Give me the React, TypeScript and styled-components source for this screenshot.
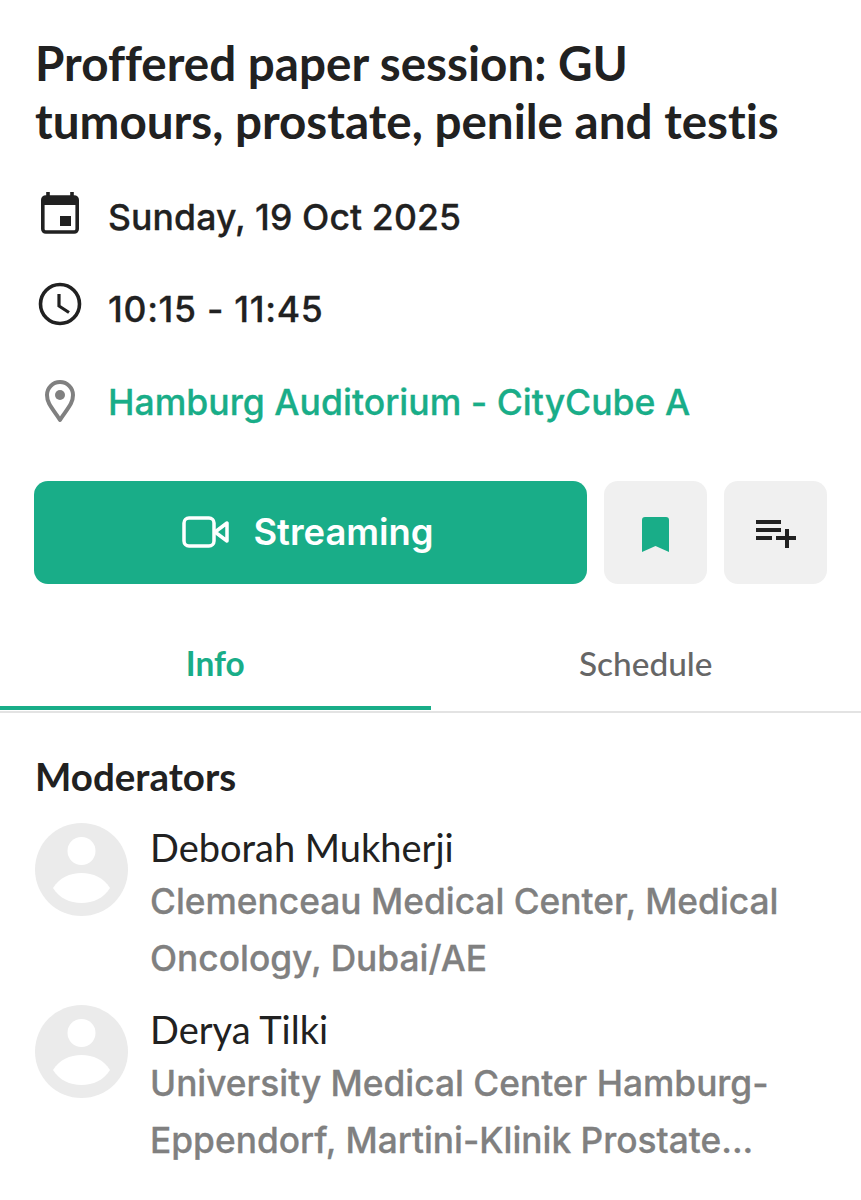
import React from "react";
import styled, { createGlobalStyle } from "styled-components";

const Global = createGlobalStyle`
  html, body { margin: 0; padding: 0; background: #fff; }
  body { width: 861px; height: 1200px; overflow: hidden; }
`;

const Page = styled.div`
  width: 861px;
  height: 1200px;
  overflow: hidden;
  display: flex;
  flex-direction: column;
  color: #212121;
  font-variant-ligatures: none;
`;

const Header = styled.div`
  padding: 34px 34px 0 35px;
  display: flex;
  flex-direction: column;
`;

const Title = styled.h1`
  margin: 0;
  font-family: "Lato", sans-serif;
  font-weight: 700;
  font-size: 47.6px;
  line-height: 58px;
  color: #212121;
  white-space: nowrap;
`;

const MetaList = styled.div`
  display: flex;
  flex-direction: column;
  margin-top: 41px;
  gap: 40px;
`;

const MetaRow = styled.div`
  display: flex;
  align-items: center;
  height: 52.5px;
  gap: 25px;
`;

const MetaIcon = styled.span<{ $lift: number }>`
  width: 48px;
  display: flex;
  justify-content: center;
  flex: none;
  padding-bottom: ${(p) => p.$lift * 2}px;
`;

const MetaText = styled.span<{ $accent?: boolean; $spacing?: number }>`
  font-family: "Inter", sans-serif;
  font-weight: 500;
  font-size: 35.6px;
  letter-spacing: ${(p) => p.$spacing ?? 0}px;
  -webkit-text-stroke: 0.3px ${(p) => (p.$accent ? "#19ad88" : "#212121")};
  color: ${(p) => (p.$accent ? "#19ad88" : "#212121")};
`;

const Actions = styled.div`
  display: flex;
  gap: 17px;
  margin: 52px 34px 0;
`;

const PrimaryButton = styled.div`
  width: 553px;
  height: 103px;
  flex: none;
  border-radius: 14px;
  background: #19ad88;
  display: flex;
  align-items: center;
  justify-content: center;
  gap: 23px;
  padding-right: 5px;
  box-sizing: border-box;
  color: #fff;
  font-family: "Inter", sans-serif;
  font-weight: 600;
  font-size: 36.4px;
`;

const IconButton = styled.div`
  width: 103px;
  height: 103px;
  flex: none;
  border-radius: 14px;
  background: #f0f0f0;
  display: flex;
  align-items: center;
  justify-content: center;
  padding-top: 4px;
  box-sizing: border-box;
`;

const Tabs = styled.div`
  display: flex;
  margin-top: 30px;
  height: 97px;
  border-bottom: 2px solid #e3e3e3;
`;

const Tab = styled.div<{ $active?: boolean }>`
  width: 50%;
  display: flex;
  align-items: center;
  justify-content: center;
  padding-top: 7px;
  box-sizing: border-box;
  height: 96px;
  font-family: "Lato", sans-serif;
  font-size: 33.4px;
  font-weight: ${(p) => (p.$active ? 700 : 500)};
  color: ${(p) => (p.$active ? "#19ad88" : "#666")};
  border-bottom: 4px solid ${(p) => (p.$active ? "#19ad88" : "transparent")};
`;

const Section = styled.section`
  padding: 38px 34px 0 35px;
`;

const Heading = styled.h2`
  margin: 0;
  font-family: "Lato", sans-serif;
  font-weight: 700;
  font-size: 38.5px;
  line-height: 50px;
  color: #212121;
`;

const People = styled.div`
  display: flex;
  flex-direction: column;
  margin-top: 22px;
`;

const Person = styled.div`
  display: flex;
  gap: 22px;
  align-items: flex-start;
  height: 182px;
`;

const Avatar = styled.svg`
  width: 93px;
  height: 93px;
  flex: none;
`;

const PersonInfo = styled.div`
  display: flex;
  flex-direction: column;
`;

const Name = styled.div`
  font-family: "Lato", sans-serif;
  font-size: 38px;
  font-weight: 400;
  line-height: 49px;
  color: #212121;
`;

const Affiliation = styled.div`
  font-family: "Inter", sans-serif;
  font-weight: 500;
  font-size: 35.3px;
  line-height: 57.5px;
  color: #808080;
  -webkit-text-stroke: 0.3px #808080;
  margin-top: 1px;
  white-space: nowrap;
`;

const PersonAvatar = () => (
  <Avatar viewBox="0 0 93 93">
    <circle cx="46.5" cy="46.5" r="46.5" fill="#ebebeb" />
    <circle cx="46.5" cy="28" r="14" fill="#fff" />
    <path d="M18 65 C24 55 35 50 46.5 50 C58 50 69 55 75 65 C69 75 58 80 46.5 80 C35 80 24 75 18 65 Z" fill="#fff" />
  </Avatar>
);

export default function App() {
  return (
    <Page>
      <Global />
      <Header>
        <Title>
          Proffered paper session: GU
          <br />
          tumours, prostate, penile and testis
        </Title>
        <MetaList>
          <MetaRow>
            <MetaIcon $lift={5}>
              <svg width="48" height="48" viewBox="0 0 48 48">
                <path d="M13 4v6M37 4v6" stroke="#212121" strokeWidth="3.6" fill="none" />
                <rect x="7.8" y="9" width="34.4" height="35" rx="3" fill="none" stroke="#212121" strokeWidth="3.6" />
                <rect x="7.8" y="9" width="34.4" height="8" fill="#212121" />
                <rect x="25" y="28" width="11" height="10" fill="#212121" />
              </svg>
            </MetaIcon>
            <MetaText $spacing={0.1}>Sunday, 19 Oct 2025</MetaText>
          </MetaRow>
          <MetaRow>
            <MetaIcon $lift={6}>
              <svg width="48" height="48" viewBox="0 0 48 48">
                <circle cx="25" cy="24" r="19.5" fill="none" stroke="#212121" strokeWidth="3.6" />
                <path d="M24 14v12l10 6.5" fill="none" stroke="#212121" strokeWidth="3.2" />
              </svg>
            </MetaIcon>
            <MetaText $spacing={0.7}>10:15 - 11:45</MetaText>
          </MetaRow>
          <MetaRow>
            <MetaIcon $lift={1}>
              <svg width="48" height="48" viewBox="0 0 48 48">
                <path d="M25 43 C18 32 12 27 12 18 A13 13 0 0 1 38 18 C38 27 32 32 25 43 Z" fill="none" stroke="#808080" strokeWidth="4" strokeLinejoin="round" />
                <circle cx="25" cy="18" r="5" fill="#808080" />
              </svg>
            </MetaIcon>
            <MetaText $accent>Hamburg Auditorium - CityCube A</MetaText>
          </MetaRow>
        </MetaList>
      </Header>
      <Actions>
        <PrimaryButton>
          <svg width="48" height="34" viewBox="0 0 48 34">
            <rect x="2" y="3" width="30" height="28" rx="5" fill="none" stroke="#fff" strokeWidth="3.5" />
            <path d="M33 17 L45 8 V26 Z" fill="none" stroke="#fff" strokeWidth="3.5" strokeLinejoin="round" />
          </svg>
          Streaming
        </PrimaryButton>
        <IconButton>
          <svg width="27" height="35" viewBox="0 0 27 35">
            <path d="M0 3 A3 3 0 0 1 3 0 H24 A3 3 0 0 1 27 3 V35 L13.5 29 L0 35 Z" fill="#19ad88" />
          </svg>
        </IconButton>
        <IconButton>
          <svg width="40" height="28" viewBox="0 0 40 28">
            <path d="M0 2h25M0 10h25M0 18h16M20 18h20M31 9v19" stroke="#212121" strokeWidth="4" fill="none" />
          </svg>
        </IconButton>
      </Actions>
      <Tabs>
        <Tab $active>Info</Tab>
        <Tab>Schedule</Tab>
      </Tabs>
      <Section>
        <Heading>Moderators</Heading>
        <People>
          <Person>
            <PersonAvatar />
            <PersonInfo>
              <Name>Deborah Mukherji</Name>
              <Affiliation>
                Clemenceau Medical Center, Medical
                <br />
                Oncology, Dubai/AE
              </Affiliation>
            </PersonInfo>
          </Person>
          <Person>
            <PersonAvatar />
            <PersonInfo>
              <Name>Derya Tilki</Name>
              <Affiliation>
                University Medical Center Hamburg-
                <br />
                Eppendorf, Martini-Klinik Prostate...
              </Affiliation>
            </PersonInfo>
          </Person>
        </People>
      </Section>
    </Page>
  );
}
